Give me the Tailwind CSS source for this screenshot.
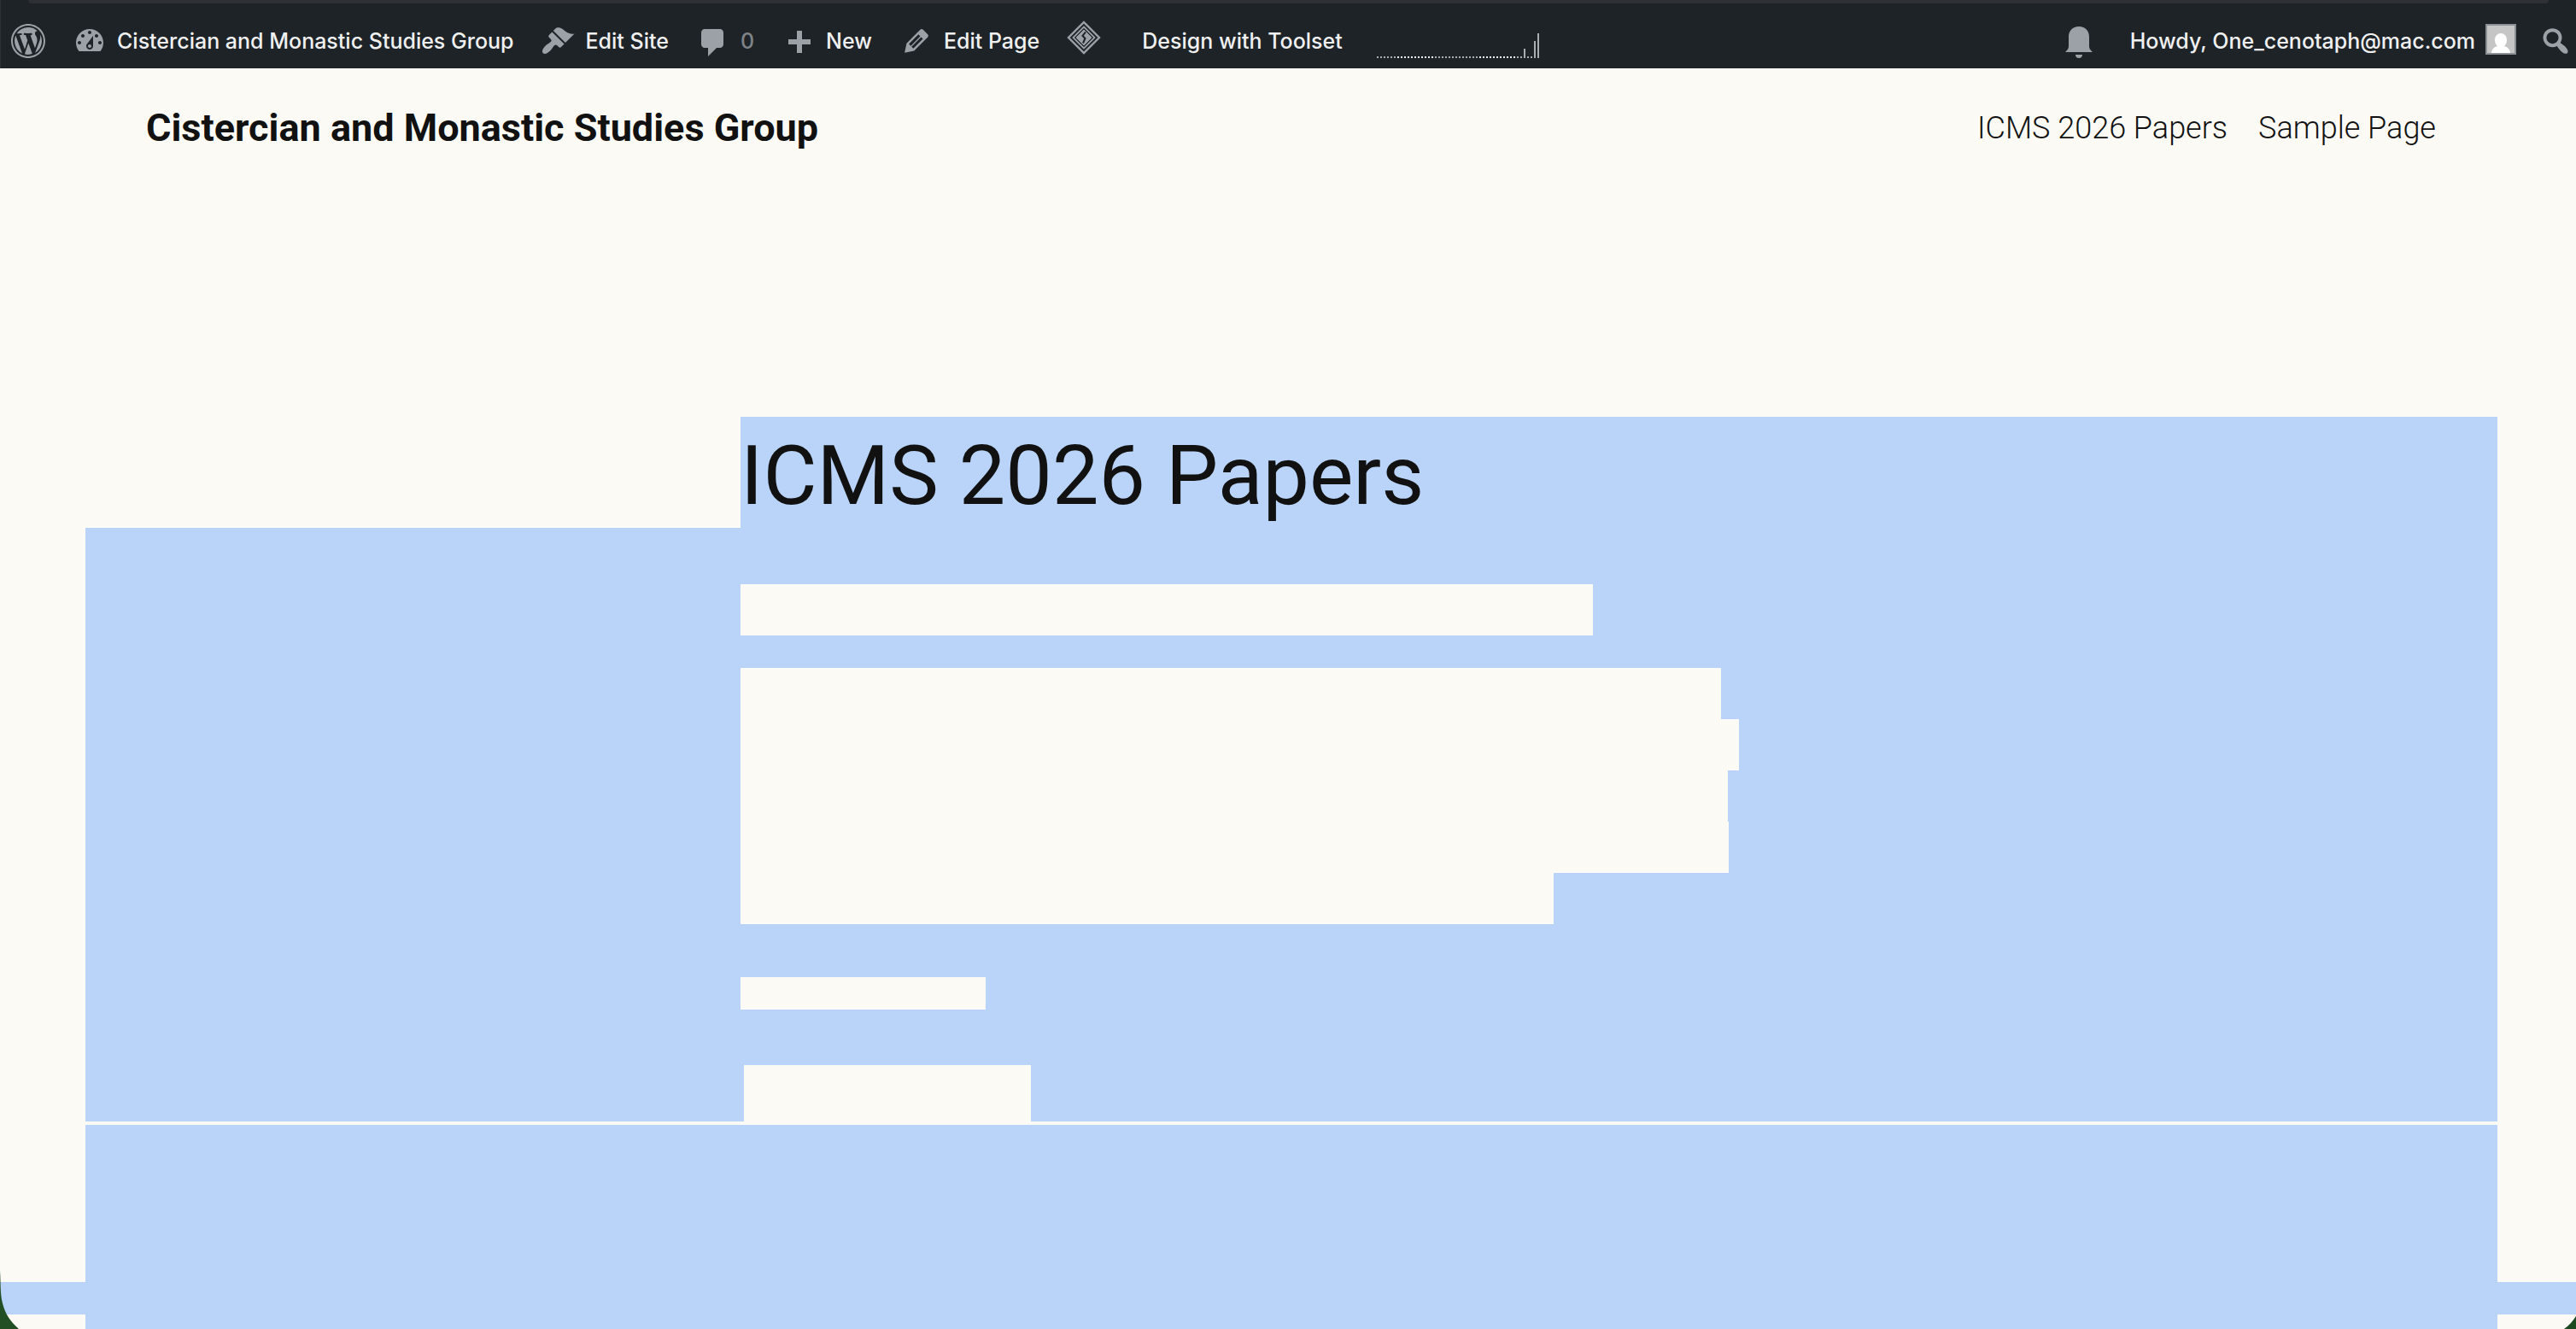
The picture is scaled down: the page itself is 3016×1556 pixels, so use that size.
<!DOCTYPE html>
<html lang="en">
  <head>
    <meta charset="UTF-8" />
    <meta name="viewport" content="width=device-width, initial-scale=1.0" />
    <title>ICMS 2026 Papers – Cistercian and Monastic Studies Group</title>
    <script src="https://cdn.jsdelivr.net/npm/@tailwindcss/browser@4"></script>
  </head>
  <body class="relative flex min-h-screen flex-col overflow-x-hidden bg-[#fbfaf5] font-['Roboto',sans-serif] text-[#111111]">
    <!-- admin bar -->
    <div class="flex h-20 flex-col border-l border-[#2c3036] bg-[#1d2327] font-['Inter',sans-serif] text-[25px] leading-8 font-medium text-[#f0f0f1]">
      <div class="mx-8 h-1 shrink-0 rounded-b-full bg-[#2d3035]"></div>
      <nav class="flex flex-1 items-center justify-between pt-3 pr-1 pl-3 whitespace-nowrap" aria-label="Toolbar">
        <div class="flex items-center gap-8">
          <a href="#" aria-label="About WordPress">
            <svg class="size-10 fill-[#9ca1a7]" viewBox="0 0 20 20"><path fill-rule="evenodd" d="M20 10c0-5.52-4.48-10-10-10S0 4.48 0 10s4.48 10 10 10 10-4.48 10-10zM10 1.01c4.97 0 8.99 4.02 8.99 8.99s-4.02 8.99-8.99 8.99S1.01 14.97 1.01 10 5.03 1.01 10 1.01zM8.01 14.82L4.96 6.61c.49-.03 1.05-.08 1.05-.08.43-.05.38-1.01-.06-.99 0 0-1.29.1-2.13.1-.15 0-.33 0-.52-.01 1.44-2.17 3.9-3.6 6.7-3.6 2.09 0 3.99.79 5.41 2.09-.6-.08-1.45.35-1.45 1.42 0 .66.38 1.22.79 1.88.31.54.5 1.22.5 2.21 0 1.34-1.27 4.48-1.27 4.48l-2.71-7.5c.48-.03.75-.16.75-.16.43-.05.38-1.1-.05-1.08 0 0-1.3.11-2.14.11-.78 0-2.11-.11-2.11-.11-.43-.02-.48 1.06-.05 1.08l.84.08 1.12 3.04zm6.02 2.15L16.64 10s.67-1.69.39-3.81c.63 1.14.94 2.42.94 3.81 0 2.96-1.56 5.58-3.94 6.97zM2.68 6.77L6.5 17.25c-2.67-1.3-4.47-4.08-4.47-7.25 0-1.16.2-2.23.65-3.23zm7.45 4.53l2.29 6.25c-.75.27-1.57.42-2.42.42-.72 0-1.41-.11-2.06-.3z" /></svg>
          </a>
          <a href="#" class="flex items-center gap-3">
            <svg class="size-10 fill-[#9ca1a7]" viewBox="0 0 20 20"><path fill-rule="evenodd" d="M3.76 16h12.48c1.1-1.37 1.76-3.11 1.76-5 0-4.42-3.58-8-8-8s-8 3.58-8 8c0 1.89.66 3.63 1.76 5zM10 4c.55 0 1 .45 1 1s-.45 1-1 1-1-.45-1-1 .45-1 1-1zM6 6c.55 0 1 .45 1 1s-.45 1-1 1-1-.45-1-1 .45-1 1-1zm8 0c.55 0 1 .45 1 1s-.45 1-1 1-1-.45-1-1 .45-1 1-1zm-5.37 5.55L12 7v6c0 1.1-.9 2-2 2s-2-.9-2-2c0-.57.24-1.08.63-1.45zM4 10c.55 0 1 .45 1 1s-.45 1-1 1-1-.45-1-1 .45-1 1-1zm12 0c.55 0 1 .45 1 1s-.45 1-1 1-1-.45-1-1 .45-1 1-1zm-5 3c0-.55-.45-1-1-1s-1 .45-1 1 .45 1 1 1 1-.45 1-1z" /></svg>
            Cistercian and Monastic Studies Group
          </a>
          <a href="#" class="flex items-center gap-3">
            <svg class="size-10 fill-[#9ca1a7]" viewBox="0 0 20 20"><path d="M14.48 11.06L7.41 3.99l1.5-1.5c.5-.56 2.3-.47 3.51.32 1.21.8 1.43 1.28 2.91 2.1 1.18.64 2.45 1.26 4.45.85zm-.71.71L6.7 4.7 4.93 6.47c-.39.39-.39 1.02 0 1.41l1.06 1.06c.39.39.39 1.03 0 1.42-.6.6-1.43 1.11-2.21 1.69-.35.26-.7.53-1.01.84C1.43 14.23.4 16.08 1.4 17.07c.99 1 2.84-.03 4.18-1.36.31-.31.58-.66.85-1.02.57-.78 1.08-1.61 1.69-2.21.39-.39 1.02-.39 1.41 0l1.06 1.06c.39.39 1.02.39 1.41 0z" /></svg>
            Edit Site
          </a>
          <a href="#" class="flex items-center gap-3 text-[#7f8387]">
            <svg class="size-10 fill-[#9ca1a7]" viewBox="0 0 20 20"><path d="M5 3h9c1.1 0 2 .9 2 2v7c0 1.1-.9 2-2 2h-2l-5 5v-5H5c-1.1 0-2-.9-2-2V5c0-1.1.9-2 2-2z" /></svg>
            0
          </a>
          <a href="#" class="flex items-center gap-3">
            <svg class="size-10 fill-[#9ca1a7]" viewBox="0 0 20 20"><path d="M17 9v3h-5v5H9v-5H4V9h5V4h3v5h5z" /></svg>
            New
          </a>
          <a href="#" class="flex items-center gap-3">
            <svg class="size-10 fill-[#9ca1a7]" viewBox="0 0 20 20"><path fill-rule="evenodd" d="M13.89 3.39l2.71 2.72c.46.46.42 1.24.03 1.64l-8.01 8.02-5.56 1.16 1.16-5.58s7.6-7.63 7.99-8.03c.39-.39 1.22-.39 1.68.07zm-2.73 2.79l-5.59 5.61 1.11 1.11 5.54-5.65zm-2.97 8.23l5.58-5.6-1.07-1.08-5.59 5.6z" /></svg>
            Edit Page
          </a>
          <a href="#" class="flex items-center gap-12">
            <svg class="mb-2 size-10" viewBox="0 0 40 40" fill="none" stroke="#9ca1a7">
              <path d="M20 2L38 20 20 38 2 20z" stroke-width="2.4" />
              <path d="M20 7.500L32.500 20 20 32.500 7.500 20z" stroke-width="1.8" />
              <path d="M20 10L30 20 20 30 10 20z" fill="#9ca1a7" stroke="#1d2327" stroke-width="1" />
              <path d="M22 13.500l-3.500 4.500 3 3-2.500 5.500" stroke="#1d2327" stroke-width="2" />
            </svg>
            Design with Toolset
          </a>
          <a href="#" class="mt-[10px] ml-2" aria-label="Site statistics">
            <svg class="h-[30px] w-[190px]" viewBox="0 0 190 30" shape-rendering="crispEdges">
              <path d="M0 29H190" stroke="#aaadaf" stroke-width="2" stroke-dasharray="2 2" />
              <path d="M24 29H68M120 29H164" stroke="#eeeeee" stroke-width="2" stroke-dasharray="2 2" />
              <path d="M173 19V30M185 10V30M189 1V30" stroke="#aaadaf" stroke-width="2" />
            </svg>
          </a>
        </div>
        <div class="flex items-center">
          <button type="button" class="mr-11" aria-label="Notifications">
            <svg class="h-10 w-8 fill-[#9ca1a7]" viewBox="0 0 32 40"><path d="M16 3C8.500 3 4 8 4 15v10c0 4-1 5-4 8h32c-3-3-4-4-4-8V15C28 8 23.500 3 16 3zM12 36h8c0 2.500-1.500 4-4 4s-4-1.500-4-4z" /></svg>
          </button>
          <a href="#" class="flex items-center gap-3">
            Howdy, One_cenotaph@mac.com
            <svg class="mb-1 size-9" viewBox="0 0 36 36">
              <path fill="#8c8f94" d="M0 0h36v36H0z" />
              <path fill="#c5c5c5" d="M2 2h32v32H2z" />
              <path fill="#ffffff" d="M18 11c4 0 7 3 7 8 0 3-1 5-3 7 4 1 7 4 7 8H7c0-4 3-7 7-8-2-2-3-4-3-7 0-5 3-8 7-8z" />
            </svg>
          </a>
          <button type="button" class="ml-[26px]" aria-label="Search">
            <svg class="size-10 fill-[#9ca1a7]" viewBox="0 0 20 20"><path fill-rule="evenodd" d="M12.14 4.18c1.87 1.87 2.11 4.75.72 6.89.12.1.22.21.36.31.2.16.47.36.81.59.34.24.56.39.66.47.42.31.73.57.94.78.32.32.6.65.84 1 .25.35.44.69.59 1.04.14.35.21.68.18 1-.02.32-.14.59-.36.81s-.49.34-.81.36c-.31.02-.65-.04-.99-.19-.35-.14-.7-.34-1.04-.59-.35-.24-.68-.52-1-.84-.21-.21-.47-.52-.77-.93-.1-.13-.25-.35-.47-.66-.22-.32-.4-.57-.56-.78-.16-.2-.29-.35-.44-.5-2.07 1.09-4.69.76-6.44-.98-2.14-2.15-2.14-5.64 0-7.78 2.15-2.15 5.63-2.15 7.78 0zm-1.41 6.36c1.36-1.37 1.36-3.58 0-4.95-1.37-1.37-3.59-1.37-4.95 0-1.37 1.37-1.37 3.58 0 4.95 1.36 1.37 3.58 1.37 4.95 0z" /></svg>
          </button>
        </div>
      </nav>
    </div>

    <!-- site header -->
    <header class="flex items-center justify-between pt-10 pr-[164px] pb-[308px] pl-[171px] leading-[60px]">
      <a href="#" class="text-[45px] font-bold">Cistercian and Monastic Studies Group</a>
      <nav class="flex gap-9 text-[36px] font-light" aria-label="Pages">
        <a href="#">ICMS 2026 Papers</a>
        <a href="#">Sample Page</a>
      </nav>
    </header>

    <!-- page content -->
    <main class="mr-[92px] ml-[100px]">
      <div class="grid grid-cols-[1fr_1290px_1fr]">
        <h1 class="col-span-2 col-start-2 bg-[#b9d4f8] pt-2 text-[97px] leading-[122px]">ICMS 2026 Papers</h1>
      </div>
      <div class="bg-[#b9d4f8] pt-[66px]">
        <div class="mx-auto max-w-[1290px]">
          <div class="h-[60px] w-[998px] bg-[#fbfaf5]"></div>
          <div class="mt-[38px]">
            <div class="h-[60px] w-[1148px] bg-[#fbfaf5]"></div>
            <div class="h-[60px] w-[1169px] bg-[#fbfaf5]"></div>
            <div class="h-[60px] w-[1156px] bg-[#fbfaf5]"></div>
            <div class="h-[60px] w-[1157px] bg-[#fbfaf5]"></div>
            <div class="h-[60px] w-[952px] bg-[#fbfaf5]"></div>
          </div>
          <div class="mt-[62px] h-[38px] w-[287px] bg-[#fbfaf5]"></div>
          <div class="mt-[65px] ml-1 h-[66px] w-[336px] bg-[#fbfaf5]"></div>
        </div>
      </div>
      <div class="mt-1 h-[184px] bg-[#b9d4f8]"></div>
    </main>
    <footer class="flex flex-1 flex-col">
      <div class="h-[38px] bg-[#b9d4f8]"></div>
      <div class="mr-[92px] ml-[100px] min-h-[17px] flex-1 bg-[#b9d4f8]"></div>
    </footer>

    <!-- window corners -->
    <svg class="absolute bottom-0 left-0 h-[68px] w-[22px] fill-[#234f24]" viewBox="0 0 22 68"><path d="M0 0c1 14 0 26 3 38 3 12 9 21 19 30H0z" /></svg>
    <svg class="absolute right-0 bottom-0 h-[15px] w-[14px] fill-[#1b4a20]" viewBox="0 0 14 15"><path d="M14 0C10 6 6 11 0 15h14z" /></svg>
  </body>
</html>
